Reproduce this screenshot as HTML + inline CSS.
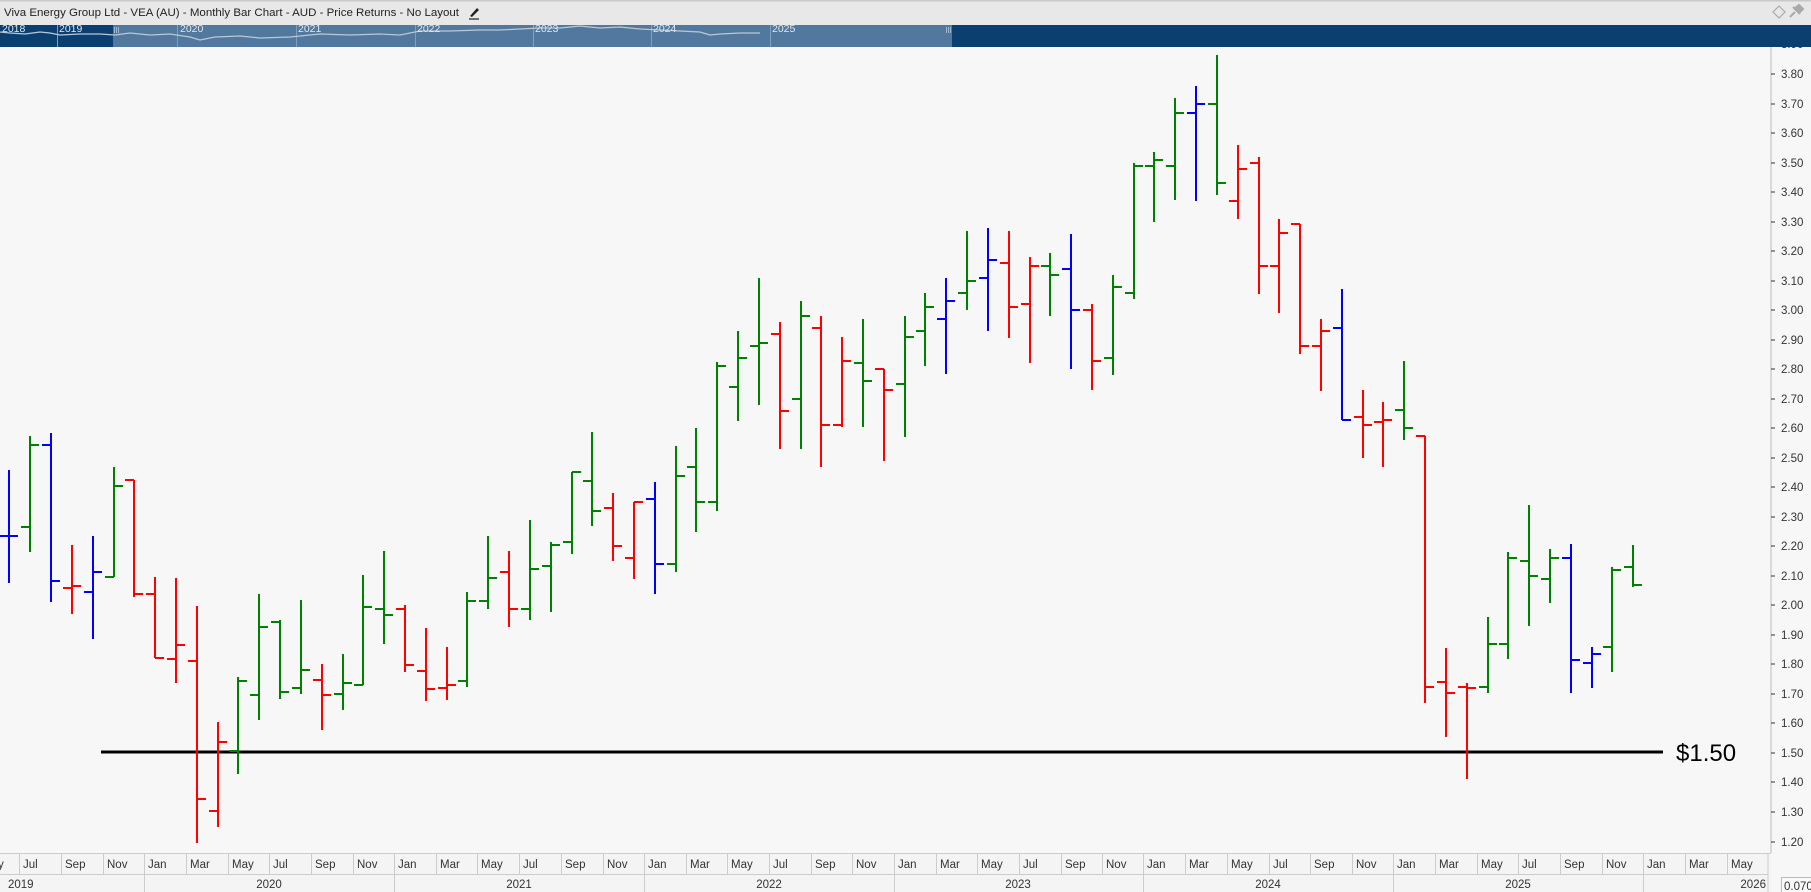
<!DOCTYPE html>
<html><head><meta charset="utf-8"><style>
html,body{margin:0;padding:0;background:#f7f7f7;}
svg{display:block;font-family:"Liberation Sans",sans-serif;}
</style></head><body>
<svg width="1811" height="892" viewBox="0 0 1811 892" xmlns="http://www.w3.org/2000/svg">
<rect width="1811" height="892" fill="#f7f7f7"/>
<g font-size="11.5" fill="#333">
<text x="1781" y="48">3.90</text>
<text x="1781" y="78">3.80</text><text x="1781" y="108">3.70</text><text x="1781" y="137">3.60</text><text x="1781" y="167">3.50</text><text x="1781" y="196">3.40</text><text x="1781" y="226">3.30</text><text x="1781" y="255">3.20</text><text x="1781" y="285">3.10</text><text x="1781" y="314">3.00</text><text x="1781" y="344">2.90</text><text x="1781" y="373">2.80</text><text x="1781" y="403">2.70</text><text x="1781" y="432">2.60</text><text x="1781" y="462">2.50</text><text x="1781" y="491">2.40</text><text x="1781" y="521">2.30</text><text x="1781" y="550">2.20</text><text x="1781" y="580">2.10</text><text x="1781" y="609">2.00</text><text x="1781" y="639">1.90</text><text x="1781" y="668">1.80</text><text x="1781" y="698">1.70</text><text x="1781" y="727">1.60</text><text x="1781" y="757">1.50</text><text x="1781" y="786">1.40</text><text x="1781" y="816">1.30</text><text x="1781" y="846">1.20</text>
</g>
<path d="M1771 40V853" stroke="#bbb" stroke-width="1"/>
<path d="M1771 44H1775M1771 74H1775M1771 104H1775M1771 133H1775M1771 163H1775M1771 192H1775M1771 222H1775M1771 251H1775M1771 281H1775M1771 310H1775M1771 340H1775M1771 369H1775M1771 399H1775M1771 428H1775M1771 458H1775M1771 487H1775M1771 517H1775M1771 546H1775M1771 576H1775M1771 605H1775M1771 635H1775M1771 664H1775M1771 694H1775M1771 723H1775M1771 753H1775M1771 782H1775M1771 812H1775M1771 842H1775" stroke="#333" stroke-width="1"/>

<rect x="101" y="750.5" width="1562" height="3" fill="#000"/>
<text x="1676" y="761" font-size="24" fill="#000">$1.50</text>

<g fill="none" stroke-width="2" shape-rendering="crispEdges">
<path stroke="#0000ff" d="M9 470V583M0 536H9M9 536H18M51 433V602M42 445H51M51 581H60M93 536V639M84 592H93M93 572H102M655 482V594M646 499H655M655 564H664M946 278V374M937 319H946M946 301H955M988 228V331M979 278H988M988 260H997M1071 234V369M1062 269H1071M1071 310H1080M1196 86V201M1187 113H1196M1196 104H1205M1342 289V420M1333 328H1342M1342 420H1351M1571 544V693M1562 558H1571M1571 660H1580M1592 647V688M1583 663H1592M1592 654H1601"/>
<path stroke="#ff0000" d="M72 545V614M63 588H72M72 586H81M134 480V597M125 480H134M134 594H143M155 577V658M146 594H155M155 658H164M176 578V683M167 659H176M176 645H185M197 606V843M188 661H197M197 799H206M218 722V827M209 811H218M218 742H227M322 664V730M313 680H322M322 695H331M405 605V672M396 609H405M405 665H414M426 628V701M417 671H426M426 689H435M447 647V700M438 688H447M447 685H456M509 551V627M500 572H509M509 609H518M613 493V561M604 508H613M613 546H622M634 502V579M625 558H634M634 502H643M780 322V449M771 334H780M780 411H789M821 316V467M812 328H821M821 425H830M842 337V427M833 425H842M842 361H851M884 369V461M875 369H884M884 390H893M1009 231V338M1000 263H1009M1009 307H1018M1030 257V363M1021 304H1030M1030 266H1039M1092 304V390M1083 310H1092M1092 361H1101M1238 145V219M1229 201H1238M1238 169H1247M1259 157V294M1250 163H1259M1259 266H1268M1279 219V313M1270 266H1279M1279 233H1288M1300 224V354M1291 224H1300M1300 346H1309M1321 319V391M1312 346H1321M1321 331H1330M1363 390V458M1354 417H1363M1363 425H1372M1383 402V467M1374 422H1383M1383 420H1392M1425 436V703M1416 436H1425M1425 687H1434M1446 648V737M1437 682H1446M1446 693H1455M1467 683V779M1458 687H1467M1467 688H1476"/>
<path stroke="#008000" d="M30 436V552M21 527H30M30 445H39M114 467V577M105 577H114M114 486H123M238 677V774M229 751H238M238 681H247M259 594V720M250 695H259M259 627H268M280 620V699M271 622H280M280 692H289M301 600V694M292 688H301M301 670H310M343 654V710M334 694H343M343 683H352M363 575V685M354 685H363M363 607H372M384 551V644M375 609H384M384 615H393M467 592V687M458 681H467M467 601H476M488 536V609M479 601H488M488 578H497M530 520V620M521 609H530M530 569H539M551 542V612M542 566H551M551 545H560M572 472V554M563 542H572M572 472H581M592 432V526M583 481H592M592 511H601M676 446V572M667 564H676M676 476H685M696 428V532M687 467H696M696 502H705M717 362V511M708 502H717M717 366H726M738 331V421M729 387H738M738 358H747M759 278V405M750 346H759M759 343H768M801 301V449M792 399H801M801 316H810M863 319V427M854 363H863M863 381H872M905 316V437M896 384H905M905 337H914M925 293V366M916 331H925M925 307H934M967 231V310M958 293H967M967 281H976M1050 253V316M1041 266H1050M1050 275H1059M1113 275V375M1104 358H1113M1113 287H1122M1134 163V299M1125 293H1134M1134 166H1143M1154 152V222M1145 166H1154M1154 160H1163M1175 98V200M1166 166H1175M1175 113H1184M1217 55V195M1208 104H1217M1217 183H1226M1404 361V440M1395 410H1404M1404 428H1413M1488 617V693M1479 687H1488M1488 644H1497M1508 552V659M1499 644H1508M1508 558H1517M1529 505V626M1520 561H1529M1529 576H1538M1550 549V603M1541 579H1550M1550 558H1559M1612 567V672M1603 647H1612M1612 570H1621M1633 545V587M1624 567H1633M1633 585H1642"/>
</g>

<rect x="0" y="853" width="1771" height="39" fill="#f4f4f4"/>
<rect x="1771" y="853" width="40" height="39" fill="#f7f7f7"/>
<path d="M0 853.5H1771M0 874.5H1768M1768 853V892" stroke="#ccc" stroke-width="1"/>
<g stroke="#ccc" stroke-width="1">
<path d="M19.5 853V874M61.5 853V874M103.5 853V874M144.5 853V892M186.5 853V874M228.5 853V874M269.5 853V874M311.5 853V874M353.5 853V874M394.5 853V892M436.5 853V874M477.5 853V874M519.5 853V874M561.5 853V874M603.5 853V874M644.5 853V892M686.5 853V874M727.5 853V874M769.5 853V874M811.5 853V874M852.5 853V874M894.5 853V892M936.5 853V874M977.5 853V874M1019.5 853V874M1061.5 853V874M1102.5 853V874M1143.5 853V892M1185.5 853V874M1227.5 853V874M1269.5 853V874M1310.5 853V874M1352.5 853V874M1393.5 853V892M1435.5 853V874M1477.5 853V874M1518.5 853V874M1560.5 853V874M1602.5 853V874M1643.5 853V892M1685.5 853V874M1727.5 853V874"/>
</g>
<g font-size="11.5" fill="#333">
<text x="-18" y="868">May</text><text x="23" y="868">Jul</text><text x="65" y="868">Sep</text><text x="107" y="868">Nov</text>
<text x="148" y="868">Jan</text><text x="190" y="868">Mar</text><text x="232" y="868">May</text><text x="273" y="868">Jul</text><text x="315" y="868">Sep</text><text x="357" y="868">Nov</text>
<text x="398" y="868">Jan</text><text x="440" y="868">Mar</text><text x="481" y="868">May</text><text x="523" y="868">Jul</text><text x="565" y="868">Sep</text><text x="607" y="868">Nov</text>
<text x="648" y="868">Jan</text><text x="690" y="868">Mar</text><text x="731" y="868">May</text><text x="773" y="868">Jul</text><text x="815" y="868">Sep</text><text x="856" y="868">Nov</text>
<text x="898" y="868">Jan</text><text x="940" y="868">Mar</text><text x="981" y="868">May</text><text x="1023" y="868">Jul</text><text x="1065" y="868">Sep</text><text x="1106" y="868">Nov</text>
<text x="1147" y="868">Jan</text><text x="1189" y="868">Mar</text><text x="1231" y="868">May</text><text x="1273" y="868">Jul</text><text x="1314" y="868">Sep</text><text x="1356" y="868">Nov</text>
<text x="1397" y="868">Jan</text><text x="1439" y="868">Mar</text><text x="1481" y="868">May</text><text x="1522" y="868">Jul</text><text x="1564" y="868">Sep</text><text x="1606" y="868">Nov</text>
<text x="1647" y="868">Jan</text><text x="1689" y="868">Mar</text><text x="1731" y="868">May</text>
<text x="8" y="888">2019</text>
<text x="269" y="888" text-anchor="middle">2020</text>
<text x="519" y="888" text-anchor="middle">2021</text>
<text x="769" y="888" text-anchor="middle">2022</text>
<text x="1018" y="888" text-anchor="middle">2023</text>
<text x="1268" y="888" text-anchor="middle">2024</text>
<text x="1518" y="888" text-anchor="middle">2025</text>
<text x="1766" y="888" text-anchor="end">2026</text>
</g>
<rect x="1781.5" y="877.5" width="32" height="16" fill="#fafafa" stroke="#bbb"/>
<text x="1784" y="890" font-size="11.5" fill="#333">0.070</text>

<rect x="0" y="0" width="1811" height="25" fill="#e8e8e8"/>
<rect x="0" y="0" width="1811" height="1.5" fill="#c8c8c8"/>
<text x="4" y="16" font-size="11.4" fill="#222" textLength="455" lengthAdjust="spacingAndGlyphs">Viva Energy Group Ltd - VEA (AU) - Monthly Bar Chart - AUD - Price Returns - No Layout</text>
<g transform="translate(469,6)">
<path d="M1 10L8 2L10 4L3 11Z" fill="#222"/>
<path d="M0 13H10" stroke="#222" stroke-width="1.2"/>
</g>
<path d="M1773 12L1779 6L1785 12L1779 18Z" fill="none" stroke="#aaa" stroke-width="1.2"/>
<path d="M1790 17L1795 12M1793 7L1800 14M1795 8L1799 5L1803 9L1800 12Z" stroke="#aaa" stroke-width="2" fill="#aaa"/>

<rect x="0" y="25" width="1811" height="22" fill="#0a3f70"/>
<rect x="113" y="25" width="839" height="22" fill="#52799d"/>
<g stroke="#7f9fbf" stroke-width="1">
<path d="M57.5 25V47M177.5 25V47M296.5 25V47M415.5 25V47M533.5 25V47M651.5 25V47M770.5 25V47"/>
</g>
<polyline fill="none" stroke="#b8c8d8" stroke-width="1.2" points="0,32 10,33 25,34 40,32 50,33 60,35 80,34 100,34 115,35 130,33 150,35 170,34 190,37 200,40 215,37 240,36 260,38 290,37 320,34 350,35 380,34 400,35 420,31 450,31 480,30 500,30 520,29 540,28 560,28 580,26 600,28 620,27 640,29 660,30 680,31 700,32 710,35 720,34 740,33 760,33"/>
<g font-size="10.5" fill="#dfe7ef">
<text x="2" y="32">2018</text><text x="59" y="32">2019</text><text x="180" y="32">2020</text><text x="298" y="32">2021</text><text x="417" y="32">2022</text><text x="535" y="32">2023</text><text x="653" y="32">2024</text><text x="772" y="32">2025</text>
</g>
<path d="M114.5 27V33M116.5 27V33M118.5 27V33M946.5 27V33M948.5 27V33M950.5 27V33" stroke="#9fb6cc" stroke-width="1"/>
</svg>
</body></html>
